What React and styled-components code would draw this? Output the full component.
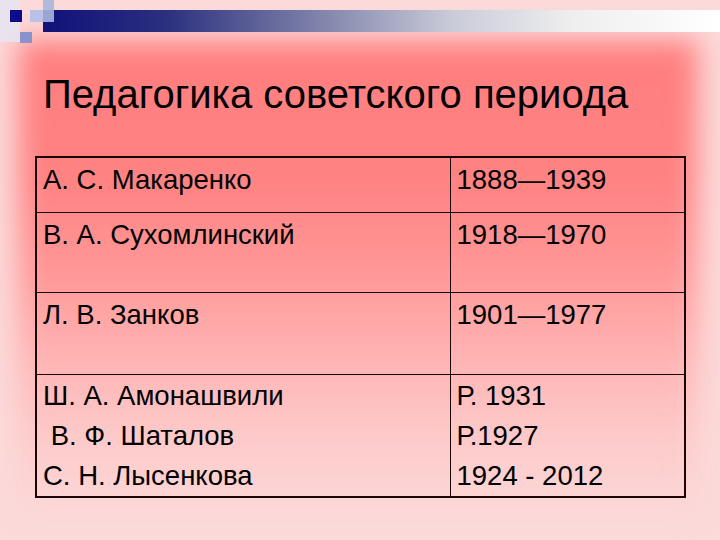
import { createGlobalStyle } from "styled-components";
import styled from "styled-components";

const GlobalStyle = createGlobalStyle`
  html, body {
    margin: 0;
    padding: 0;
  }
  body {
    font-family: "Liberation Sans", Arial, sans-serif;
    color: #000;
  }
`;

const Slide = styled.div`
  position: relative;
  width: 720px;
  height: 540px;
  overflow: hidden;
  background: #fcdada;
`;

// soft red glow behind the content
const Glow = styled.div`
  position: absolute;
  left: 18px;
  right: 22px;
  top: 40px;
  bottom: 30px;
  background: linear-gradient(
    180deg,
    #ff7e7e 0%,
    #ff8282 30%,
    #ff9898 50%,
    #ffb4b4 68%,
    #fdcaca 85%,
    #fcd6d6 100%
  );
  filter: blur(14px);
`;

const Content = styled.div`
  position: relative;
  display: flex;
  flex-direction: column;
`;

const Header = styled.div`
  position: relative;
  height: 45px;
`;

const Bar = styled.div`
  margin-left: 43px;
  margin-top: 10px;
  height: 22px;
  background: linear-gradient(
    90deg,
    #11117a 0%,
    #2a2f7e 18%,
    #7d80a8 40%,
    #c8cad8 60%,
    #eeeeee 78%,
    #ffffff 100%
  );
`;

const Logo = styled.svg`
  position: absolute;
  left: 0;
  top: 0;
`;

const Title = styled.h1`
  margin: 26px 0 0 43px;
  font-weight: 400;
  font-size: 40px;
  line-height: 46px;
  letter-spacing: 0;
`;

const Table = styled.table`
  margin: 39px 0 0 35px;
  width: 651px;
  border-collapse: collapse;
  border: 2px solid #1a0606;
`;

const Cell = styled.td`
  border: 1px solid #1a0606;
  padding: ${({ pt }) => pt}px 0 0 6px;
  vertical-align: top;
  font-size: 27.5px;
  height: ${({ h }) => h}px;
  width: ${({ w }) => (w ? `${w}px` : "auto")};
  box-sizing: border-box;
  line-height: ${({ lh }) => lh}px;
`;

const Line = styled.div`
  white-space: pre;
`;

const rows = [
  { h: 55, lh: 32, pt: 6, name: ["А. С. Макаренко"], years: ["1888—1939"] },
  { h: 80, lh: 32, pt: 6, name: ["В. А. Сухомлинский"], years: ["1918—1970"] },
  { h: 82, lh: 32, pt: 6, name: ["Л. В. Занков"], years: ["1901—1977"] },
  {
    h: 121,
    lh: 40,
    pt: 1,
    name: ["Ш. А. Амонашвили", " В. Ф. Шаталов", "С. Н. Лысенкова"],
    years: ["Р. 1931", "Р.1927", "1924 - 2012"],
  },
];

export default function App() {
  return (
    <>
      <GlobalStyle />
      <Slide>
        <Glow />
        <Content>
          <Header>
            <Bar />
            <Logo width="60" height="45" viewBox="0 0 60 45">
              <rect x="0" y="0" width="20" height="42" fill="#e6e4f2" opacity="0.85" />
              <rect x="10" y="10" width="12" height="12" fill="#0c0c8c" />
              <rect x="30" y="10" width="13" height="12" fill="#b7c2e6" />
              <rect x="43" y="0" width="11" height="22" fill="#aab6dc" opacity="0.9" />
              <rect x="20" y="32" width="12" height="11" fill="#8a92cc" />
            </Logo>
          </Header>
          <Title>Педагогика советского периода</Title>
          <Table>
            <tbody>
              {rows.map((r, i) => (
                <tr key={i}>
                  <Cell h={r.h} w={414} lh={r.lh} pt={r.pt}>
                    {r.name.map((t) => (
                      <Line key={t}>{t}</Line>
                    ))}
                  </Cell>
                  <Cell h={r.h} lh={r.lh} pt={r.pt}>
                    {r.years.map((t) => (
                      <Line key={t}>{t}</Line>
                    ))}
                  </Cell>
                </tr>
              ))}
            </tbody>
          </Table>
        </Content>
      </Slide>
    </>
  );
}
